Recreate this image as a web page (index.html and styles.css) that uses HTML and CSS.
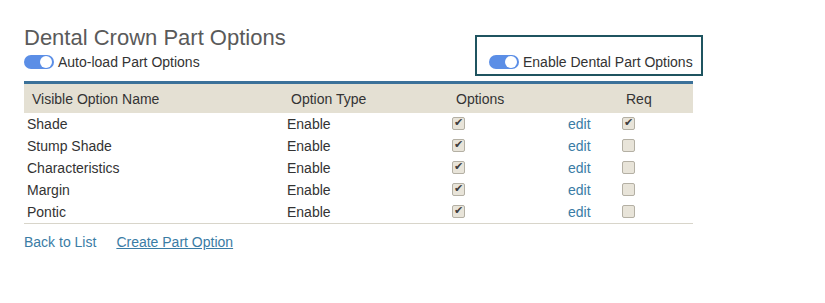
FILE: index.html
```html
<!DOCTYPE html>
<html lang="en">
<head>
  <meta charset="UTF-8" />
  <title>Dental Crown Part Options</title>
  <link rel="stylesheet" href="styles.css">
</head>
<body>
  <div class="page">
    <div class="top">
      <div class="title-block">
        <h1>Dental Crown Part Options</h1>
        <label class="switch-row">
          <span class="switch on"><span class="knob"></span></span>
          Auto-load Part Options
        </label>
      </div>
      <div class="enable-box">
        <label class="switch-row">
          <span class="switch on"><span class="knob"></span></span>
          Enable Dental Part Options
        </label>
      </div>
    </div>

    <table class="options">
      <thead>
        <tr>
          <th class="c-name">Visible Option Name</th>
          <th class="c-type">Option Type</th>
          <th class="c-opt">Options</th>
          <th class="c-edit"></th>
          <th class="c-req">Req</th>
        </tr>
      </thead>
      <tbody>
        <tr>
          <td>Shade</td>
          <td>Enable</td>
          <td><input type="checkbox" checked></td>
          <td><a href="#">edit</a></td>
          <td><input type="checkbox" checked></td>
        </tr>
        <tr>
          <td>Stump Shade</td>
          <td>Enable</td>
          <td><input type="checkbox" checked></td>
          <td><a href="#">edit</a></td>
          <td><input type="checkbox"></td>
        </tr>
        <tr>
          <td>Characteristics</td>
          <td>Enable</td>
          <td><input type="checkbox" checked></td>
          <td><a href="#">edit</a></td>
          <td><input type="checkbox"></td>
        </tr>
        <tr>
          <td>Margin</td>
          <td>Enable</td>
          <td><input type="checkbox" checked></td>
          <td><a href="#">edit</a></td>
          <td><input type="checkbox"></td>
        </tr>
        <tr>
          <td>Pontic</td>
          <td>Enable</td>
          <td><input type="checkbox" checked></td>
          <td><a href="#">edit</a></td>
          <td><input type="checkbox"></td>
        </tr>
      </tbody>
    </table>

    <div class="links">
      <a href="#" class="back">Back to List</a>
      <a href="#" class="create">Create Part Option</a>
    </div>
  </div>
</body>
</html>
```

FILE: styles.css
```css
:root {
  --text: #333;
  --title: #5a5a5a;
  --link: #3a7ca5;
  --head-bg: #e4e0d3;
  --blue-bar: #3b7199;
  --box-border: #1f5460;
  --toggle: #5b8ee6;
}

body {
  margin: 0;
  font-family: "Liberation Sans", Arial, sans-serif;
  font-size: 14px;
  color: var(--text);
  background: #fff;
}

.page {
  padding: 24px 24px 0 24px;
  width: 669px;
}

.top {
  display: flex;
  align-items: flex-start;
}

.title-block {
  flex: 1;
}

h1 {
  margin: 0;
  font-size: 22px;
  font-weight: normal;
  line-height: 28px;
  color: var(--title);
}

.title-block .switch-row {
  margin-top: 2px;
}

.switch-row {
  display: flex;
  align-items: center;
  gap: 4px;
  line-height: 16px;
  white-space: nowrap;
}

.switch {
  position: relative;
  display: inline-block;
  width: 30px;
  height: 14px;
  border-radius: 7px;
  background: #ccc;
}

.switch.on {
  background: var(--toggle);
}

.knob {
  position: absolute;
  top: 1px;
  left: 1px;
  width: 12px;
  height: 12px;
  border-radius: 50%;
  background: #fff;
}

.switch.on .knob {
  left: auto;
  right: 2px;
}

.enable-box {
  box-sizing: border-box;
  width: 228px;
  margin-top: 11px;
  margin-right: -10px;
  border: 2px solid var(--box-border);
  padding: 17px 0 4px 12px;
}

table.options {
  margin-top: 5px;
  width: 669px;
  border-collapse: collapse;
  border-top: 3px solid var(--blue-bar);
  border-bottom: 1px solid #d8d5ca;
}

thead th {
  background: var(--head-bg);
  font-weight: normal;
  text-align: left;
  height: 29px;
  padding: 0 0 0 8px;
  color: #333;
}

.c-name { width: 251px; }
.c-type { width: 157px; }
.c-opt { width: 109px; }
.c-edit { width: 45px; }

tbody td {
  height: 22px;
  padding: 0 0 0 3px;
}

tbody td:nth-child(2) { padding-left: 4px; }
tbody td:nth-child(4) { padding-left: 3px; }

td a {
  color: var(--link);
  text-decoration: none;
}

input[type="checkbox"] {
  appearance: none;
  -webkit-appearance: none;
  width: 13px;
  height: 13px;
  margin: 0 0 0 1px;
  border: 1px solid #b4b0a4;
  border-radius: 2px;
  background: #e8e4d9;
  position: relative;
  vertical-align: -1px;
}

input[type="checkbox"]:checked::before {
  content: "✔";
  position: absolute;
  left: 1px;
  top: -2px;
  font-size: 11px;
  color: #3e3e3e;
}

.links {
  margin-top: 10px;
  display: flex;
  gap: 20px;
}

.links a {
  color: var(--link);
  text-decoration: none;
}

.links a.create {
  text-decoration: underline;
}
```
